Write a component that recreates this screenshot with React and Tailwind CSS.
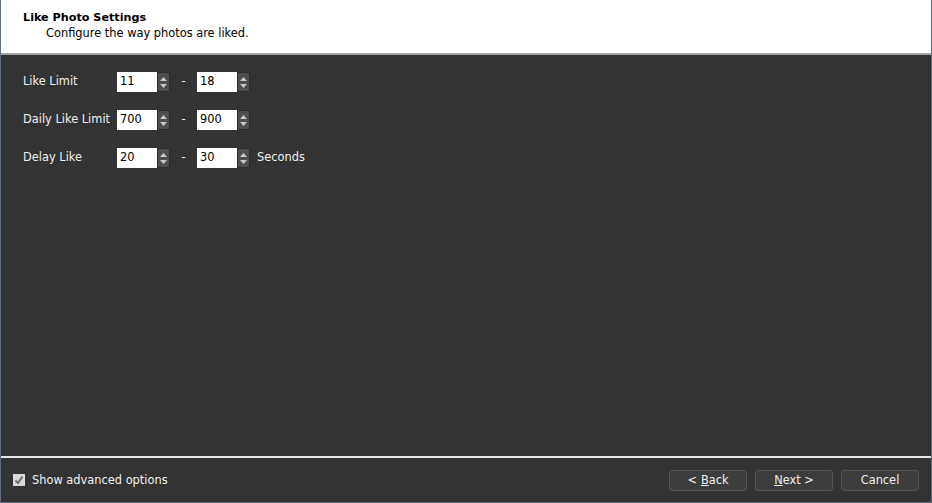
import React from "react";

const font = { fontFamily: '"DejaVu Sans", Verdana, sans-serif' };

function Spinner() {
  return (
    <div className="flex h-[20px] w-[13px] flex-col items-center justify-center gap-[3px] rounded-[2px] border border-[#2a2a2a] bg-[#4d4d4d]">
      <svg width="7" height="4" viewBox="0 0 7 4">
        <path d="M0 4 L3.5 0 L7 4 Z" fill="#c8c8c8" />
      </svg>
      <svg width="7" height="4" viewBox="0 0 7 4">
        <path d="M0 0 L3.5 4 L7 0 Z" fill="#c8c8c8" />
      </svg>
    </div>
  );
}

function NumberBox({ value }) {
  return (
    <div className="flex items-center">
      <div className="flex h-[20px] w-[40px] items-center bg-white pl-[3px] text-[11.4px] text-black">
        {value}
      </div>
      <Spinner />
    </div>
  );
}

function RangeRow({ label, from, to, unit }) {
  return (
    <div className="flex h-[20px] items-center text-[11.4px] text-[#f0f0f0]">
      <div className="w-[94px]">{label}</div>
      <NumberBox value={from} />
      <div className="w-[27px] text-center">-</div>
      <NumberBox value={to} />
      {unit && <div className="ml-[7px]">{unit}</div>}
    </div>
  );
}

function Button({ children }) {
  return (
    <div className="flex h-[21px] w-[78px] items-center justify-center rounded-[3px] border border-[#555555] bg-[#3d3d3d] text-[11.4px] text-[#f0f0f0]">
      {children}
    </div>
  );
}

export default function App() {
  return (
    <div
      className="flex h-[503px] w-[932px] flex-col border border-t-0 border-[#5f6e7d] bg-[#333333]"
      style={font}
    >
      <div className="flex h-[53px] flex-col bg-white pl-[22px] pt-[11px]">
        <div className="text-[11.2px] font-bold leading-[14px] text-black">Like Photo Settings</div>
        <div className="pl-[23px] pt-[1px] text-[11.4px] leading-[14px] text-black">
          Configure the way photos are liked.
        </div>
      </div>
      <div className="h-[2px] bg-[#a3a3a3]" />
      <div className="flex flex-1 flex-col gap-[18px] pl-[22px] pt-[17px]">
        <RangeRow label="Like Limit" from="11" to="18" />
        <RangeRow label="Daily Like Limit" from="700" to="900" />
        <RangeRow label="Delay Like" from="20" to="30" unit="Seconds" />
      </div>
      <div className="h-[2px] bg-[#e6e6e6]" />
      <div className="flex h-[44px] items-center pl-[12px] pr-[12px] pt-[1px]">
        <div className="flex items-center gap-[7px] text-[11.4px] text-[#f0f0f0]">
          <div className="flex h-[12px] w-[12px] items-center justify-center bg-[#d8d8d8]">
            <svg width="10" height="10" viewBox="0 0 10 10">
              <path d="M1.5 5.5 L4 8 L8.5 1.5" fill="none" stroke="#6a6a6a" strokeWidth="1.8" />
            </svg>
          </div>
          <span>Show advanced options</span>
        </div>
        <div className="ml-auto flex gap-[8px]">
          <Button>
            &lt; <span className="ml-[4px] underline">B</span>ack
          </Button>
          <Button>
            <span className="underline">N</span>ext &gt;
          </Button>
          <Button>Cancel</Button>
        </div>
      </div>
    </div>
  );
}
